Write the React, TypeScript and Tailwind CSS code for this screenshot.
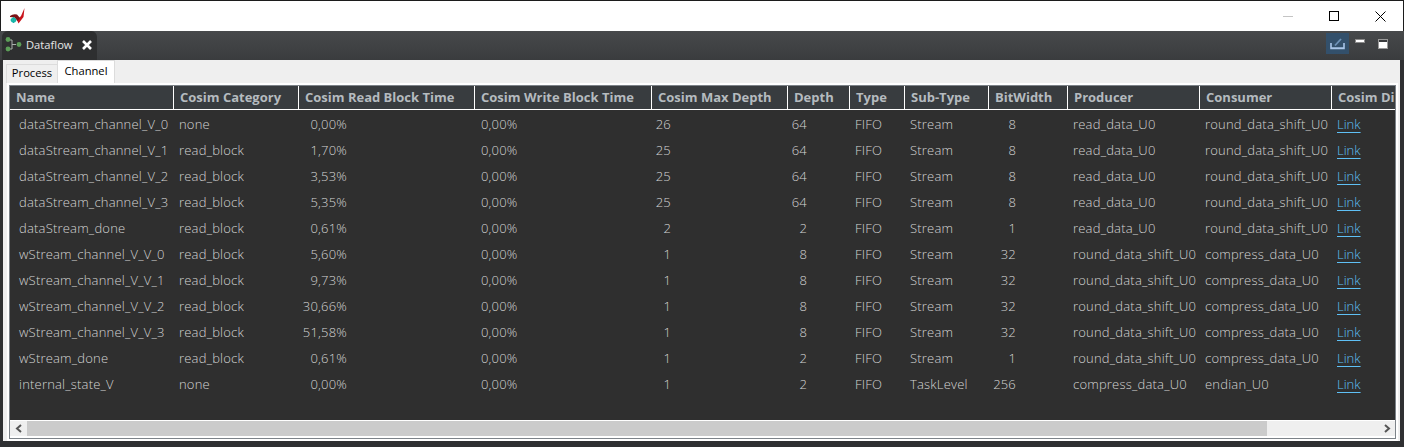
const font = { fontFamily: '"Open Sans", "Noto Sans", sans-serif' };

const columns = "grid-cols-[164px_125px_176px_177px_136px_62px_55px_84px_79px_132px_132px_63px]";

const headers = [
  "Name",
  "Cosim Category",
  "Cosim Read Block Time",
  "Cosim Write Block Time",
  "Cosim Max Depth",
  "Depth",
  "Type",
  "Sub-Type",
  "BitWidth",
  "Producer",
  "Consumer",
  "Cosim Di",
];

type Row = [string, string, string, string, string, string, string, string];

const rows: Row[] = [
  ["dataStream_channel_V_0", "none", "0,00%", "26", "64", "Stream", "8", "read_data_U0"],
  ["dataStream_channel_V_1", "read_block", "1,70%", "25", "64", "Stream", "8", "read_data_U0"],
  ["dataStream_channel_V_2", "read_block", "3,53%", "25", "64", "Stream", "8", "read_data_U0"],
  ["dataStream_channel_V_3", "read_block", "5,35%", "25", "64", "Stream", "8", "read_data_U0"],
  ["dataStream_done", "read_block", "0,61%", "2", "2", "Stream", "1", "read_data_U0"],
  ["wStream_channel_V_V_0", "read_block", "5,60%", "1", "8", "Stream", "32", "round_data_shift_U0"],
  ["wStream_channel_V_V_1", "read_block", "9,73%", "1", "8", "Stream", "32", "round_data_shift_U0"],
  ["wStream_channel_V_V_2", "read_block", "30,66%", "1", "8", "Stream", "32", "round_data_shift_U0"],
  ["wStream_channel_V_V_3", "read_block", "51,58%", "1", "8", "Stream", "32", "round_data_shift_U0"],
  ["wStream_done", "read_block", "0,61%", "1", "2", "Stream", "1", "round_data_shift_U0"],
  ["internal_state_V", "none", "0,00%", "1", "2", "TaskLevel", "256", "compress_data_U0"],
];

function consumerFor(row: Row) {
  if (row[7] === "read_data_U0") return "round_data_shift_U0";
  if (row[7] === "round_data_shift_U0") return "compress_data_U0";
  return "endian_U0";
}

function AppLogo() {
  return (
    <svg width="17" height="18" viewBox="0 0 17 18" className="ml-[8px]">
      <path d="M15.5 1 L14.5 10 L9.5 16.5 L8 13 L12 9 Z" fill="#c8141c" />
      <path d="M1 9 Q4 6.5 8 7.5 L11 11 L8.5 14 L5.5 10.5 L1 10 Z" fill="#7c1216" />
      <circle cx="4.5" cy="13" r="2.6" fill="#17b5a8" />
      <rect x="3.8" y="12.3" width="1.4" height="1.4" fill="#dffaf7" />
      <path d="M1.5 13 H7.5 M4.5 10 V16" stroke="#17b5a8" strokeWidth="1" />
    </svg>
  );
}

function DataflowIcon() {
  return (
    <svg width="18" height="15" viewBox="0 0 18 15" className="shrink-0">
      <path d="M4 3 H7 V12 H4 M7 7.5 H11" stroke="#a9afac" strokeWidth="1" fill="none" />
      <circle cx="3" cy="2.5" r="2.4" fill="#5c9e58" />
      <circle cx="3" cy="12" r="2.4" fill="#5c9e58" />
      <circle cx="14" cy="7.5" r="2.4" fill="#5c9e58" />
    </svg>
  );
}

export default function App() {
  return (
    <div className="flex h-[447px] w-[1404px] flex-col overflow-hidden bg-[#2f3032] text-[13px] tracking-[0.2px]" style={font}>
      {/* title bar */}
      <div className="flex h-[31px] shrink-0 items-center justify-between border-t border-l border-r border-[#1c1c1c] bg-white">
        <AppLogo />
        <div className="flex items-center">
          <div className="flex h-[31px] w-[46px] items-center justify-center">
            <div className="h-px w-[10px] bg-[#c4c4c4]" />
          </div>
          <div className="flex h-[31px] w-[46px] items-center justify-center">
            <div className="h-[10px] w-[10px] border border-black" />
          </div>
          <div className="flex h-[31px] w-[46px] items-center justify-center">
            <svg width="11" height="11" viewBox="0 0 11 11">
              <path d="M0.5 0.5 L10.5 10.5 M10.5 0.5 L0.5 10.5" stroke="#000" strokeWidth="1" />
            </svg>
          </div>
        </div>
      </div>

      {/* view tab strip */}
      <div className="flex h-[29px] shrink-0 items-start justify-between bg-gradient-to-b from-[#47494b] to-[#3a3c3e] pl-[2px] pr-[16px]">
        <div className="flex h-[29px] w-[95px] items-center gap-[3px] rounded-t-[6px] bg-[#2e2f30] pb-[2px] pl-[3px] text-[#e6e6e6]">
          <DataflowIcon />
          <span className="text-[11.2px] leading-none tracking-normal">Dataflow</span>
          <svg width="10" height="10" viewBox="0 0 10 10" className="ml-[6px]">
            <path d="M1 1 L9 9 M9 1 L1 9" stroke="#fff" strokeWidth="2.6" />
          </svg>
        </div>
        <div className="flex items-start">
          <div className="mt-[2px] flex h-[21px] w-[23px] items-center justify-center bg-[#33506b]">
            <svg width="15" height="13" viewBox="0 0 15 13">
              <path d="M1 6 V11.5 H14 V6 M1 11 H14" stroke="#a9c5e8" strokeWidth="1.6" fill="none" />
              <path d="M5 8.5 L11 2" stroke="#6f93b8" strokeWidth="1.8" fill="none" />
            </svg>
          </div>
          <div className="ml-[6px] mt-[8px] h-[4px] w-[10px] border border-[#8a8a8a] bg-white" />
          <div className="ml-[13px] mt-[8px] flex h-[10px] w-[10px] flex-col border border-[#9a9a9a] bg-white">
            <div className="h-[2px] bg-[#3a3c3e]" />
          </div>
        </div>
      </div>

      {/* editor panel */}
      <div className="ml-[3px] mr-[4px] flex h-[381px] flex-col bg-[#efefef]">
        <div className="flex h-[23px] shrink-0 items-end pl-[3px] text-black">
          <div className="flex h-[19px] w-[51px] items-center justify-center border-l border-t border-[#dcdcdc] pb-[2px] text-[11.2px] tracking-normal">Process</div>
          <div className="flex h-[23px] w-[58px] items-center justify-center border-x border-t border-[#dcdcdc] bg-white pb-[2px] text-[11.2px] tracking-normal">Channel</div>
        </div>

        {/* table frame */}
        <div className="ml-[4px] mr-[2px] flex min-h-0 flex-1 flex-col overflow-hidden border border-white bg-white p-px">
          <div className="flex min-h-0 flex-1 flex-col overflow-hidden border border-[#7c8288] bg-white pb-[2px]">
            <div className={`grid h-[24px] shrink-0 border-b border-white bg-[#383c3f] text-[13px] font-bold tracking-normal text-[#b5bbbf] ${columns}`}>
              {headers.map((h) => (
                <div key={h} className="flex items-center overflow-hidden whitespace-nowrap border-r border-white px-[6px] last:border-r-0">
                  {h}
                </div>
              ))}
            </div>
            <div className="min-h-0 flex-1 overflow-hidden bg-[#2f2f2f] pt-[2px] font-light text-[#d4d4d4]">
              {rows.map((r) => (
                <div key={r[0]} className={`grid h-[26px] items-center whitespace-nowrap ${columns}`}>
                  <div className="pl-[9px]">{r[0]}</div>
                  <div className="pl-[5px]">{r[1]}</div>
                  <div className="w-[48px] text-right">{r[2]}</div>
                  <div className="pl-[6px]">0,00%</div>
                  <div className="w-[19px] text-right">{r[3]}</div>
                  <div className="w-[19px] text-right">{r[4]}</div>
                  <div className="pl-[5px]">FIFO</div>
                  <div className="pl-[5px]">{r[5]}</div>
                  <div className="w-[27px] text-right">{r[6]}</div>
                  <div className="pl-[5px]">{r[7]}</div>
                  <div className="pl-[5px]">{consumerFor(r)}</div>
                  <div className="pl-[5px] tracking-normal text-[#5fc0f5] underline underline-offset-[3px]">Link</div>
                </div>
              ))}
            </div>
            {/* horizontal scrollbar */}
            <div className="flex h-[16px] shrink-0 items-end border-t border-white bg-[#efefef]">
              <div className="flex h-[15px] w-[17px] items-center justify-center">
                <svg width="8" height="9" viewBox="0 0 8 9">
                  <path d="M6 1 L2 4.5 L6 8" stroke="#555" strokeWidth="2" fill="none" />
                </svg>
              </div>
              <div className="h-[15px] w-[1240px] bg-[#cbcbcb]" />
              <div className="flex-1" />
              <div className="flex h-[15px] w-[17px] items-center justify-center">
                <svg width="8" height="9" viewBox="0 0 8 9">
                  <path d="M2 1 L6 4.5 L2 8" stroke="#555" strokeWidth="2" fill="none" />
                </svg>
              </div>
            </div>
          </div>
        </div>
      </div>
    </div>
  );
}
